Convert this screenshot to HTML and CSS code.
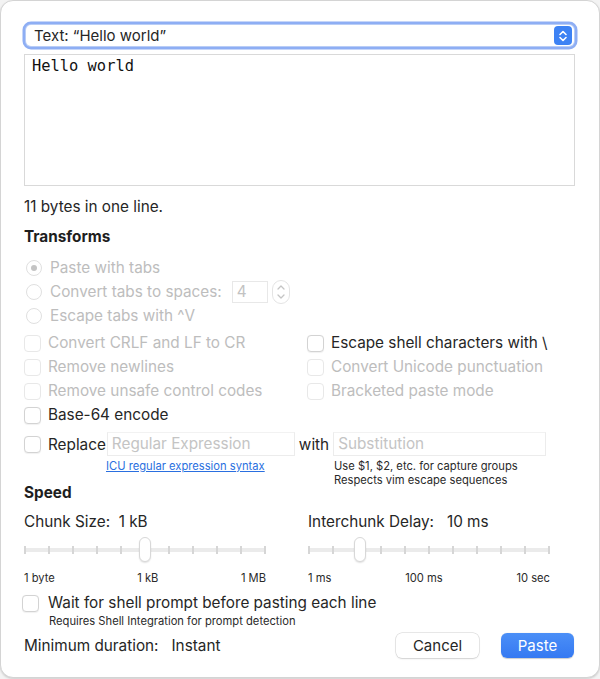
FILE: index.html
```html
<!DOCTYPE html>
<html>
<head>
<meta charset="utf-8">
<link rel="stylesheet" href="styles.css">
</head>
<body>
<div class="window">
  <div class="popup">
    <span class="popup-label">Text: “Hello world”</span>
    <span class="popup-btn">
      <svg width="12" height="16" viewBox="0 0 12 16"><path d="M3 6.5 L6 3.5 L9 6.5 M3 9.5 L6 12.5 L9 9.5" fill="none" stroke="#fff" stroke-width="1.6" stroke-linecap="round" stroke-linejoin="round"/></svg>
    </span>
  </div>
  <div class="textarea">Hello world</div>
  <div class="info">11 bytes in one line.</div>
  <div class="heading transforms">Transforms</div>

  <div class="radios">
    <div class="row disabled"><span class="radio checked"></span><span>Paste with tabs</span></div>
    <div class="row disabled"><span class="radio"></span><span>Convert tabs to spaces:</span>
      <span class="numfield">4</span>
      <span class="stepper">
        <svg width="18" height="24" viewBox="0 0 18 24"><rect x="0.5" y="0.5" width="17" height="23" rx="8.5" fill="#fff" stroke="#e4e4e4"/><path d="M6 9 L9 6 L12 9 M6 15 L9 18 L12 15" fill="none" stroke="#c4c4c4" stroke-width="1.3" stroke-linecap="round" stroke-linejoin="round"/></svg>
      </span>
    </div>
    <div class="row disabled"><span class="radio"></span><span>Escape tabs with ^V</span></div>
  </div>

  <div class="checks">
    <div class="row disabled"><span class="check"></span><span>Convert CRLF and LF to CR</span></div>
    <div class="row"><span class="check"></span><span>Escape shell characters with \</span></div>
    <div class="row disabled"><span class="check"></span><span>Remove newlines</span></div>
    <div class="row disabled"><span class="check"></span><span>Convert Unicode punctuation</span></div>
    <div class="row disabled"><span class="check"></span><span>Remove unsafe control codes</span></div>
    <div class="row disabled"><span class="check"></span><span>Bracketed paste mode</span></div>
    <div class="row"><span class="check"></span><span>Base-64 encode</span></div>
  </div>

  <div class="replace">
    <span class="check"></span><span class="replace-label">Replace</span>
    <span class="field regex">Regular Expression</span>
    <span class="with">with</span>
    <span class="field subst">Substitution</span>
  </div>
  <div class="hints">
    <a class="link" href="#">ICU regular expression syntax</a>
    <div class="hint-right">Use $1, $2, etc. for capture groups<br>Respects vim escape sequences</div>
  </div>

  <div class="heading speed">Speed</div>
  <div class="sliders">
    <div class="slider-col">
      <div class="slider-title">Chunk Size:&nbsp; 1 kB</div>
      <div class="slider">
        <div class="track"></div>
        <div class="ticks"><i></i><i></i><i></i><i></i><i></i><i></i><i></i><i></i><i></i><i></i><i></i></div>
        <div class="knob" style="left:115px"></div>
      </div>
      <div class="scale"><span>1 byte</span><span>1 kB</span><span>1 MB</span></div>
    </div>
    <div class="slider-col">
      <div class="slider-title">Interchunk Delay:&nbsp;&nbsp; 10 ms</div>
      <div class="slider">
        <div class="track"></div>
        <div class="ticks"><i></i><i></i><i></i><i></i><i></i><i></i><i></i><i></i><i></i><i></i><i></i></div>
        <div class="knob" style="left:46px"></div>
      </div>
      <div class="scale"><span>1 ms</span><span>100 ms</span><span>10 sec</span></div>
    </div>
  </div>

  <div class="row wait"><span class="check"></span><span>Wait for shell prompt before pasting each line</span></div>
  <div class="requires">Requires Shell Integration for prompt detection</div>

  <div class="footer">
    <div class="duration"><span>Minimum duration:</span><span class="instant">Instant</span></div>
    <div class="buttons">
      <button class="btn cancel">Cancel</button>
      <button class="btn paste">Paste</button>
    </div>
  </div>
</div>
</body>
</html>
```
FILE: styles.css
```css
* { box-sizing: border-box; }
html, body { margin: 0; padding: 0; }
body {
  background: #f3f3f3;
  font-family: Inter, "Liberation Sans", sans-serif;
  font-size: 15.3px;
  color: #262626;
  width: 600px;
  height: 679px;
  overflow: hidden;
}
.window {
  width: 600px;
  height: 678px;
  background: #fff;
  border: 1px solid #d4d4d4;
  border-radius: 13px;
  padding: 24px 24px 0 23px;
  box-shadow: 0 1px 2px rgba(0,0,0,0.15);
}
.popup {
  height: 21px;
  margin: 0 1px 0 2px;
  border-radius: 5px;
  box-shadow: 0 0 0 1px #b9cdf6, 0 0 0 3.5px #8eaef4;
  display: flex;
  align-items: center;
  justify-content: space-between;
  padding-left: 8px;
  background: #fff;
}
.popup-label { font-size: 15px; line-height: 21px; }
.popup-btn {
  width: 18px;
  height: 19px;
  margin-right: 2px;
  background: #3d82f4;
  border-radius: 4px;
  display: flex;
  align-items: center;
  justify-content: center;
}
.textarea {
  margin-top: 8px;
  height: 132px;
  border: 1px solid #d9d9d9;
  font-family: "DejaVu Sans Mono", monospace;
  font-size: 15.4px;
  line-height: 20px;
  padding: 1px 7px;
  color: #111;
}
.info { margin-top: 12px; line-height: 18px; }
.heading { font-weight: 700; line-height: 18px; color: #1e1e1e; }
.transforms { margin-top: 12px; }
.radios { margin-top: 10px; }
.row {
  display: flex;
  align-items: center;
  height: 24px;
  line-height: 18px;
}
.disabled { color: #bdbdbd; }
.radio {
  width: 16px; height: 16px;
  border-radius: 50%;
  border: 1px solid #e0e0e0;
  margin: 0 8px 0 2px;
  flex: none;
  position: relative;
}
.radio.checked::after {
  content: "";
  position: absolute;
  left: 4px; top: 4px;
  width: 6px; height: 6px;
  border-radius: 50%;
  background: #c4c4c4;
}
.numfield {
  width: 36px; height: 22px;
  border: 1px solid #e8e8e8;
  margin-left: 10px;
  padding-left: 4px;
  line-height: 20px;
  color: #c2c2c2;
}
.stepper { margin-left: 4px; display: flex; }
.checks {
  margin-top: 3px;
  display: grid;
  grid-template-columns: 283px 1fr;
}
.check {
  width: 17px; height: 17px;
  border-radius: 4px;
  border: 1px solid #d3d3d3;
  margin-right: 7px;
  flex: none;
  background: #fff;
  box-shadow: 0 0.5px 1px rgba(0,0,0,0.06);
}
.disabled .check { border-color: #e8e8e8; box-shadow: none; }
.replace {
  margin-top: 5px;
  height: 24px;
  display: flex;
  align-items: center;
}
.replace-label { margin-right: 1px; }
.field {
  height: 24px;
  border: 1px solid #ececec;
  border-top-color: #f2f2f2;
  color: #c4c4c4;
  line-height: 22px;
  padding-left: 4px;
}
.regex { width: 188px; }
.with { margin: 0 4px 0 4px; }
.subst { width: 213px; }
.hints {
  height: 18px;
  display: flex;
  font-size: 11.2px;
  line-height: 14px;
  padding-top: 3px;
}
.link {
  color: #2a6fe0;
  margin-left: 82px;
  width: 228px;
  text-decoration: underline;
}
.hint-right { color: #2a2a2a; }
.speed { margin-top: 10px; }
.sliders {
  margin-top: 11px;
  display: grid;
  grid-template-columns: 284px 1fr;
}
.slider-col { width: 242px; }
.slider-title { line-height: 18px; }
.slider {
  position: relative;
  height: 28px;
  margin-top: 5px;
}
.track {
  position: absolute;
  left: 0; right: 0; top: 12px;
  height: 4px;
  background: #ebebeb;
  border-radius: 2px;
}
.ticks {
  position: absolute;
  left: 0; right: 0; top: 10px;
  height: 8px;
  display: flex;
  justify-content: space-between;
}
.ticks i {
  display: block;
  width: 1.5px;
  height: 8px;
  background: #d6d6d6;
}
.knob {
  position: absolute;
  top: 1px;
  width: 12px;
  height: 25px;
  border-radius: 6px;
  background: #fff;
  border: 1px solid #d8d8d8;
  box-shadow: 0 1px 1.5px rgba(0,0,0,0.12);
}
.scale {
  margin-top: 7px;
  display: flex;
  justify-content: space-between;
  font-size: 11.2px;
  line-height: 14px;
  color: #2a2a2a;
}
.wait { margin-top: 6px; margin-left: -2px; }
.wait .check { margin-right: 9px; }
.requires {
  margin-top: -1px;
  margin-left: 25px;
  font-size: 11.2px;
  line-height: 14px;
  color: #2a2a2a;
}
.footer {
  margin-top: 4px;
  display: flex;
  align-items: center;
  justify-content: space-between;
  height: 26px;
}
.instant { margin-left: 13px; }
.buttons { display: flex; gap: 22px; padding-right: 1px; }
.btn {
  font-family: Inter, "Liberation Sans", sans-serif;
  font-size: 15px;
  height: 25px;
  border-radius: 6px;
  border: none;
  padding: 0;
}
.cancel {
  width: 83px;
  background: #fff;
  color: #262626;
  box-shadow: 0 0 0 0.5px #d0d0d0, 0 1px 1.5px rgba(0,0,0,0.15);
}
.paste {
  width: 73px;
  background: linear-gradient(#4b8ff7, #3579f2);
  color: #fff;
  box-shadow: 0 0.5px 1px rgba(0,0,0,0.2);
}
```
